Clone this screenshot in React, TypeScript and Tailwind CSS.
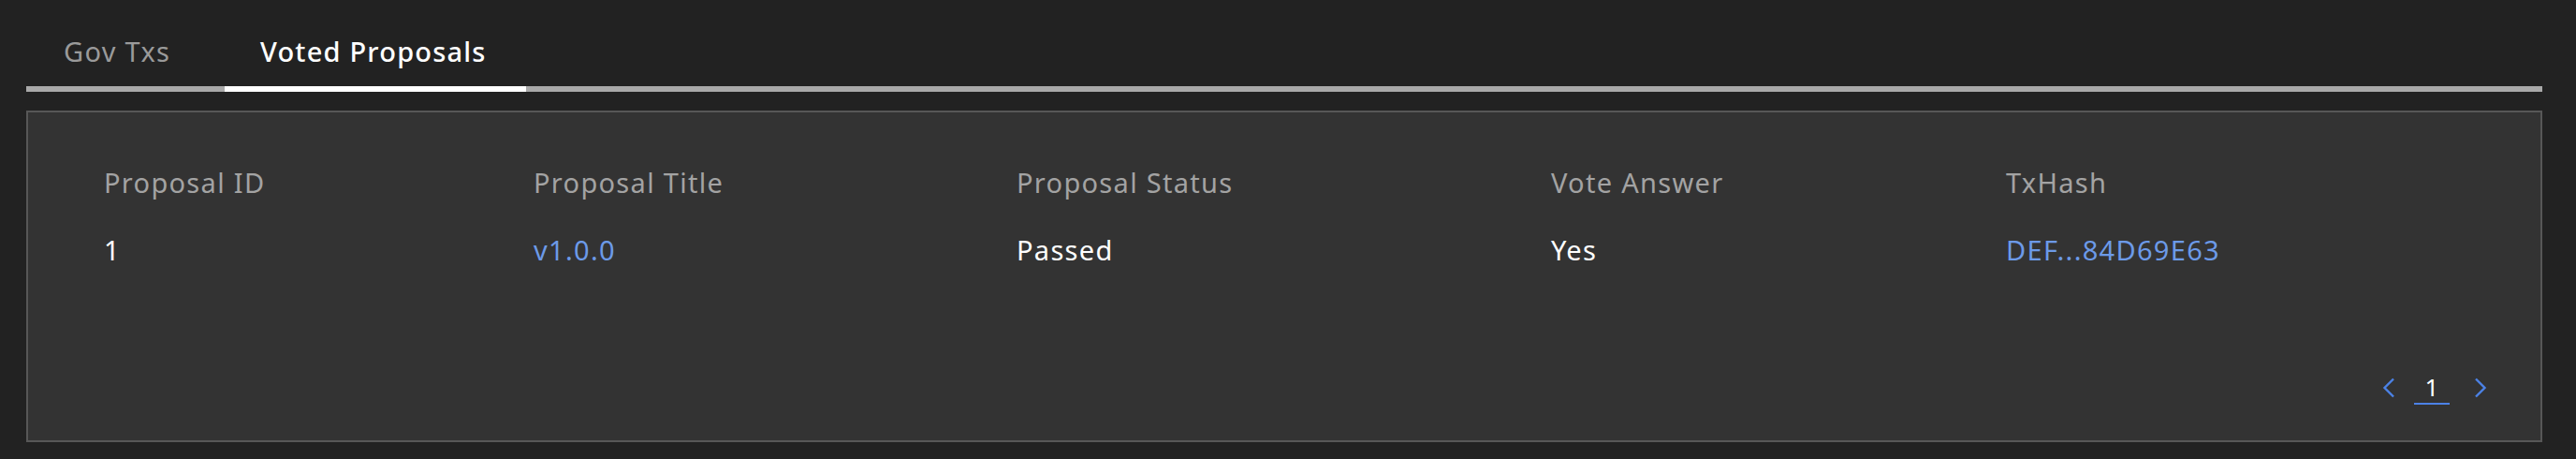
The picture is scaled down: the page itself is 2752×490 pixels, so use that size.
import React from "react";

const font = { fontFamily: '"Noto Sans", "Open Sans", sans-serif' };

function Chevron({ dir }: { dir: "left" | "right" }) {
  return (
    <svg width="14" height="22" viewBox="0 0 14 22" className="block">
      {dir === "left" ? (
        <polyline points="12,1.5 2.5,11 12,20.5" fill="none" stroke="#4c82e6" strokeWidth="2.4" />
      ) : (
        <polyline points="2,1.5 11.5,11 2,20.5" fill="none" stroke="#4c82e6" strokeWidth="2.4" />
      )}
    </svg>
  );
}

export default function App() {
  return (
    <div className="min-h-[490px] w-full bg-[#222222] pl-[28px] pr-[36px]" style={font}>
      <div className="flex border-b-[6px] border-[#a9a9a9] pt-[36px]">
        <div className="-mb-[6px] w-[212px] border-b-[6px] border-transparent pl-[40px] pb-[18px] text-[29px] leading-[38px] tracking-[1.3px] text-[#9a9a9a]">
          Gov Txs
        </div>
        <div className="-mb-[6px] w-[322px] border-b-[6px] border-white pl-[38px] pb-[18px] text-[29px] font-medium leading-[38px] tracking-[1.2px] text-white">
          Voted Proposals
        </div>
      </div>
      <div className="mt-[20px] flex h-[354px] flex-col border-2 border-[#575757] bg-[#333333]">
        <div className="grid grid-cols-[459px_516px_571px_486px_1fr] pl-[81px] pt-[56px] text-[29px] leading-[38px] tracking-[1.3px]">
          <div className="text-[#a3a3a3]">Proposal ID</div>
          <div className="text-[#a3a3a3]">Proposal Title</div>
          <div className="text-[#a3a3a3]">Proposal Status</div>
          <div className="text-[#a3a3a3]">Vote Answer</div>
          <div className="text-[#a3a3a3]">TxHash</div>
          <div className="mt-[34px] text-white">1</div>
          <div className="mt-[34px] text-[#6c9ae8]">v1.0.0</div>
          <div className="mt-[34px] text-white">Passed</div>
          <div className="mt-[34px] text-white">Yes</div>
          <div className="mt-[34px] text-[#6c9ae8]">DEF...84D69E63</div>
        </div>
        <div className="mt-auto mb-[38px] flex items-center justify-end pr-[57px]">
          <Chevron dir="left" />
          <div className="ml-[20px] mr-[26px] w-[38px] border-b-2 border-[#4c82e6] text-center text-[26px] leading-[34px] text-white">
            1
          </div>
          <Chevron dir="right" />
        </div>
      </div>
    </div>
  );
}
